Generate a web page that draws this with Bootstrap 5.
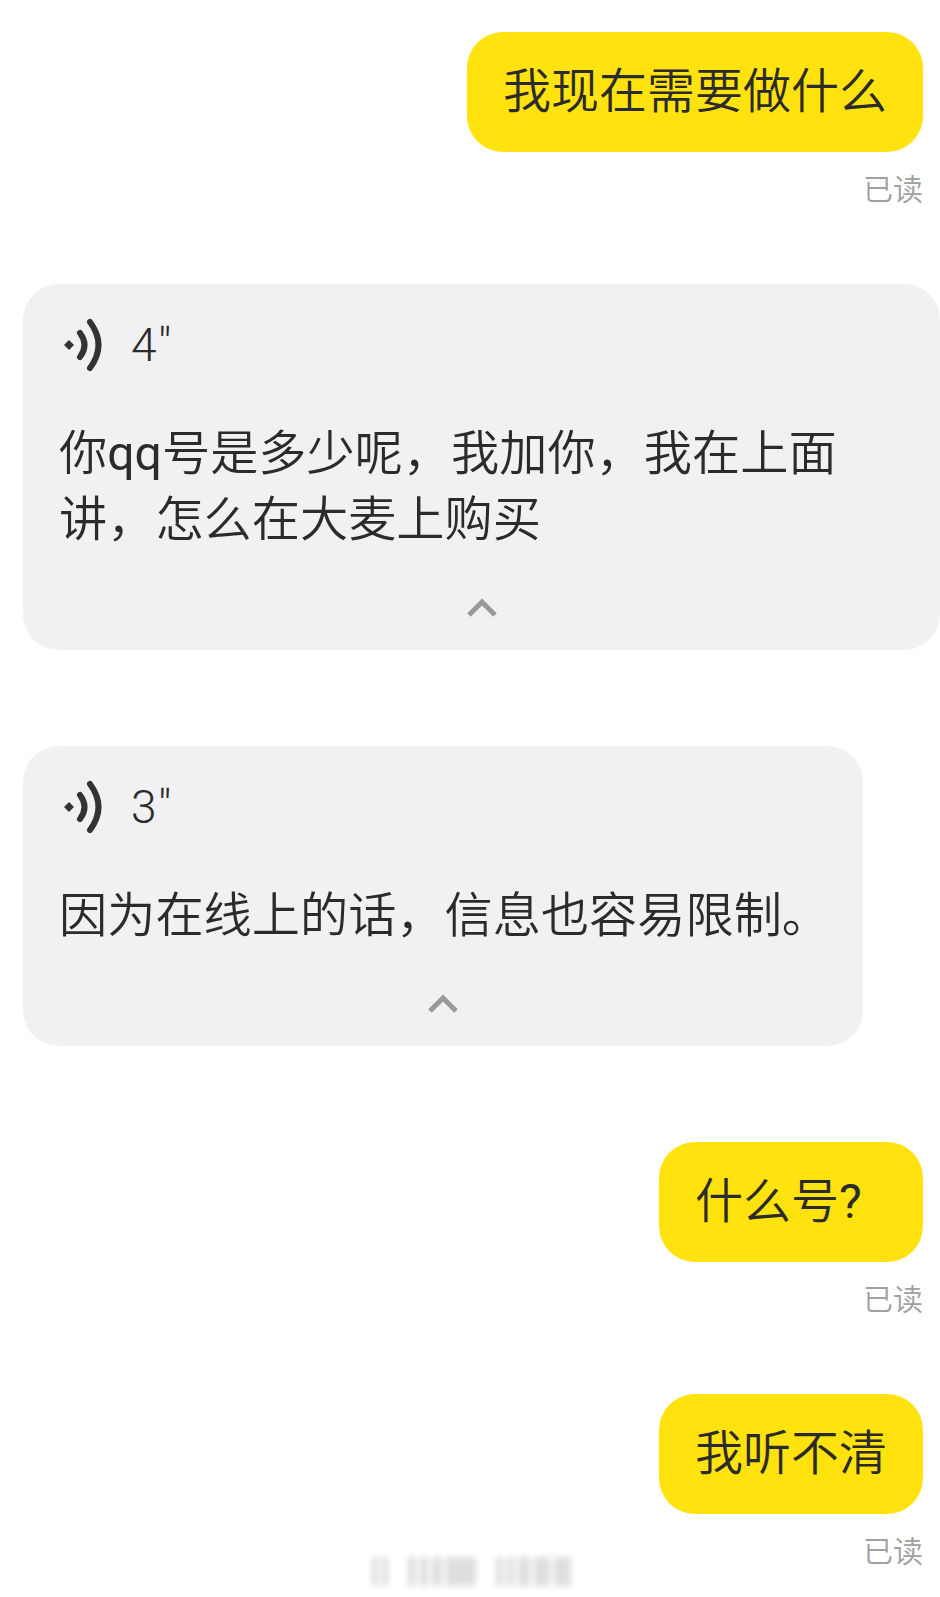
<!DOCTYPE html>
<html lang="zh-CN">
<head>
  <meta charset="UTF-8">
  <title>聊天记录</title>
  <meta name="viewport" content="width=device-width, initial-scale=1">
  <link href="https://cdn.jsdelivr.net/npm/bootstrap@5.3.2/dist/css/bootstrap.min.css" rel="stylesheet">
  <style>
    html, body { height: 100%; }
    body {
      background: #fff;
      color: #2b2b2b;
      font-family: Roboto, "Noto Sans CJK SC", sans-serif;
      font-weight: 350;
      overflow: hidden;
      position: relative;
    }
    .chat-wrap { padding: 32px 17px 0 23px; }
    .my-row { display: flex; flex-direction: column; align-items: flex-end; }
    .my-bubble {
      background: #ffe20e;
      border-radius: 36px;
      height: 120px;
      min-width: 264px;
      padding: 0 36px;
      font-size: 48px;
      line-height: 120px;
      white-space: nowrap;
    }
    .read-tag { font-size: 30px; line-height: 38px; color: #a0a0a0; margin-top: 19px; }
    .voice-card {
      background: #f1f1f3;
      border-radius: 36px;
      padding: 34px 36px 0;
    }
    .voice-wide { margin-right: -17px; height: 366px; margin-top: 75px; }
    .voice-short { width: 840px; height: 300px; margin-top: 96px; }
    .voice-head { display: flex; align-items: center; height: 54px; font-size: 46px; letter-spacing: 1.5px; font-weight: 300; }
    .voice-head svg { width: 42px; height: 54px; margin: 0 28px 0 2px; }
    .voice-text { font-size: 48.2px; line-height: 66px; margin-top: 49px; white-space: nowrap; }
    .latin-bit { font-weight: 400; }
    .chev { display: block; margin: 45px auto 0; width: 32px; height: 20px; }
    .gap-a { margin-top: 96px; }
    .gap-b { margin-top: 75px; }
    .blur-mark {
      position: absolute;
      left: 372px;
      top: 1557px;
      display: flex;
      filter: blur(3px);
    }
    .blur-mark span { display: block; height: 29px; margin-right: 4px; background: #dedede; }
  </style>
</head>
<body>
  <div class="chat-wrap">
    <div class="my-row">
      <div class="my-bubble">我现在需要做什么</div>
      <div class="read-tag">已读</div>
    </div>

    <div class="voice-card voice-wide">
      <div class="voice-head">
        <svg viewBox="0 0 42 54"><path d="M3 27 l5 -5 l5 5 l-5 5z" fill="#333"/><path d="M19 15 q9 12 0 24" fill="none" stroke="#333" stroke-width="6" stroke-linecap="round"/><path d="M29 4 q17 23 0 46" fill="none" stroke="#333" stroke-width="6" stroke-linecap="round"/></svg>
        <span>4"</span>
      </div>
      <div class="voice-text">你<span class="latin-bit">qq</span>号是多少呢，我加你，我在上面<br>讲，怎么在大麦上购买</div>
      <svg class="chev" viewBox="0 0 32 20"><path d="M3 17 L16 4 L29 17" fill="none" stroke="#999" stroke-width="5"/></svg>
    </div>

    <div class="voice-card voice-short">
      <div class="voice-head">
        <svg viewBox="0 0 42 54"><path d="M3 27 l5 -5 l5 5 l-5 5z" fill="#333"/><path d="M19 15 q9 12 0 24" fill="none" stroke="#333" stroke-width="6" stroke-linecap="round"/><path d="M29 4 q17 23 0 46" fill="none" stroke="#333" stroke-width="6" stroke-linecap="round"/></svg>
        <span>3"</span>
      </div>
      <div class="voice-text">因为在线上的话，信息也容易限制。</div>
      <svg class="chev" viewBox="0 0 32 20"><path d="M3 17 L16 4 L29 17" fill="none" stroke="#999" stroke-width="5"/></svg>
    </div>

    <div class="my-row gap-a">
      <div class="my-bubble">什么号<span class="latin-bit">?</span></div>
      <div class="read-tag">已读</div>
    </div>

    <div class="my-row gap-b">
      <div class="my-bubble">我听不清</div>
      <div class="read-tag">已读</div>
    </div>
  </div>

  <div class="blur-mark">
    <span style="width:6px"></span><span style="width:6px;margin-right:20px"></span>
    <span style="width:8px"></span><span style="width:8px"></span><span style="width:10px"></span><span style="width:30px;margin-right:20px"></span>
    <span style="width:7px"></span><span style="width:7px"></span><span style="width:12px"></span><span style="width:16px"></span><span style="width:17px"></span>
  </div>
</body>
</html>
